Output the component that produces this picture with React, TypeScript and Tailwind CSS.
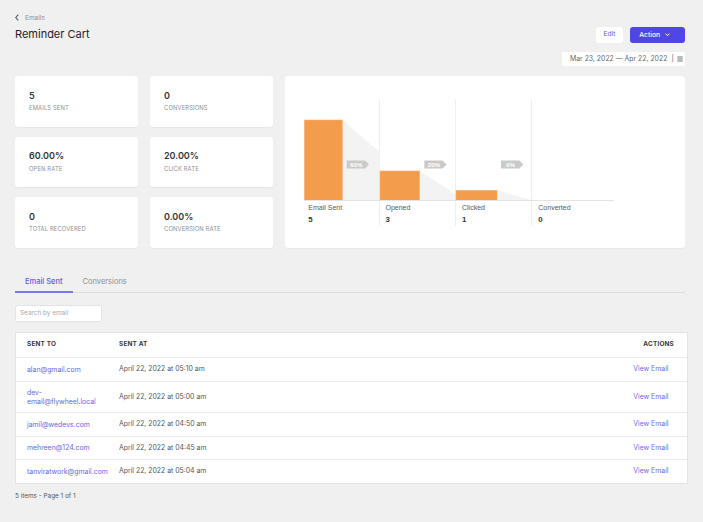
import React from "react";

const stats = [
  { value: "5", label: "Emails Sent" },
  { value: "0", label: "Conversions" },
  { value: "60.00%", label: "Open Rate" },
  { value: "20.00%", label: "Click Rate" },
  { value: "0", label: "Total Recovered" },
  { value: "0.00%", label: "Conversion Rate" },
];

const rows = [
  { email: ["alan@gmail.com"], sentAt: "April 22, 2022 at 05:10 am" },
  { email: ["dev-", "email@flywheel.local"], sentAt: "April 22, 2022 at 05:00 am" },
  { email: ["jamil@wedevs.com"], sentAt: "April 22, 2022 at 04:50 am" },
  { email: ["mehreen@124.com"], sentAt: "April 22, 2022 at 04:45 am" },
  { email: ["tanviratwork@gmail.com"], sentAt: "April 22, 2022 at 05:04 am" },
];

// funnel stages, coordinates are page pixels (shifted into the card by the <g>)
const stages = [
  { label: "Email Sent", value: "5", lx: 308.3, bar: [304.3, 120, 38, 80.3] },
  { label: "Opened", value: "3", lx: 385.5, bar: [380, 171, 39.7, 29.3] },
  { label: "Clicked", value: "1", lx: 462, bar: [456, 190.3, 41, 10] },
  { label: "Converted", value: "0", lx: 538.3, bar: null },
];

const shades = [
  "342.3,120 379.5,152 379.5,200 342.3,200",
  "419.7,171 455.5,194.3 455.5,200 419.7,200",
  "497,190.3 531.5,200 497,200",
];

const tags = [
  { x: 346.7, text: "60%" },
  { x: 424.3, text: "20%" },
  { x: 501, text: "0%" },
];

const FunnelChart: React.FC = () => (
  <svg width="400" height="171" viewBox="0 0 400 171" className="block">
    <g transform="translate(-285 -76)">
      {[379.5, 455.5, 531.5].map((x) => (
        <line key={x} x1={x} x2={x} y1={99} y2={226.5} stroke="#efefef" strokeWidth="1" />
      ))}
      {shades.map((p) => (
        <polygon key={p} points={p} fill="#f3f3f3" />
      ))}
      {stages.map((s) =>
        s.bar ? (
          <rect
            key={s.label}
            x={s.bar[0]}
            y={s.bar[1]}
            width={s.bar[2]}
            height={s.bar[3]}
            fill="#f39c4b"
            stroke="#f6b27a"
            strokeWidth="0.6"
          />
        ) : null
      )}
      <line x1={304} x2={614} y1={200.5} y2={200.5} stroke="#e4e4e4" strokeWidth="1" />
      {tags.map((t) => (
        <g key={t.text}>
          <polygon
            points={`${t.x},160.4 ${t.x + 18.3},160.4 ${t.x + 22.3},164.4 ${t.x + 18.3},168.4 ${t.x},168.4`}
            fill="#cacaca"
          />
          <text
            x={t.x + 9.6}
            y={166.6}
            textAnchor="middle"
            fontSize="6.2"
            fontWeight="700"
            fill="#ffffff"
            fontFamily="'Liberation Sans', Arial, sans-serif"
          >
            {t.text}
          </text>
        </g>
      ))}
      {stages.map((s) => (
        <g key={s.label} fontFamily="'Liberation Sans', Arial, sans-serif">
          <text x={s.lx} y={210.3} fontSize="7" fill="#555a60">
            {s.label}
          </text>
          <text x={s.lx} y={222} fontSize="7.8" fontWeight="700" fill="#32373c">
            {s.value}
          </text>
        </g>
      ))}
    </g>
  </svg>
);

export default function App() {
  return (
    <div className="min-h-screen bg-[#f0f0f1] pl-[15px] pr-[18px] pt-[13.5px] pb-4 font-['Inter',sans-serif] text-[#2c3338]">
      <div className="flex items-start justify-between">
        <div>
          <div className="flex h-[8px] items-center gap-[6px] text-[6.5px] leading-[8px] text-[#8a8e93]">
            <svg width="4" height="7" viewBox="0 0 4 7">
              <path d="M3.3 0.6 L0.8 3.5 L3.3 6.4" stroke="#50575e" strokeWidth="1.1" fill="none" />
            </svg>
            <span>Emails</span>
          </div>
          <h1 className="mt-[5.8px] text-[11px] leading-[14px] text-[#1d2327]">Reminder Cart</h1>
        </div>
        <div className="flex flex-col items-end pt-[13.5px]">
          <div className="flex gap-[7px]">
            <button className="flex h-[16px] w-[27px] items-center justify-center rounded-[3px] bg-white text-[6.6px] text-[#5b55e6]">
              Edit
            </button>
            <button className="flex h-[16px] w-[55px] items-center gap-[5px] rounded-[3px] bg-[#4f46e5] pl-[9.3px] text-[6.8px] font-medium text-white">
              Action
              <svg width="5" height="3.5" viewBox="0 0 5 3.5">
                <path d="M0.6 0.6 L2.5 2.7 L4.4 0.6" stroke="#ffffff" strokeWidth="1" fill="none" />
              </svg>
            </button>
          </div>
          <div className="mt-[9px] flex h-[14px] w-[123px] items-center rounded-[2px] bg-white pl-[8px] text-[6.9px] text-[#646970]">
            <span>Mar 23, 2022 — Apr 22, 2022</span>
            <span className="ml-[4px] text-[#50575e]">|</span>
            <svg className="ml-[3.5px]" width="6" height="6" viewBox="0 0 6 6">
              <path d="M0.3 1 H5.7 M0.3 3 H5.7 M0.3 5 H5.7" stroke="#50575e" strokeWidth="0.8" />
            </svg>
          </div>
        </div>
      </div>

      <div className="mt-[10px] flex gap-[12px]">
        <div className="grid w-[258px] grid-cols-2 gap-x-[12px] gap-y-[10.2px]">
          {stats.map((s) => (
            <div
              key={s.label}
              className="h-[50.5px] rounded-[3px] bg-white pl-[14px] pt-[13.5px] shadow-[0_1px_1px_rgba(0,0,0,0.04)]"
            >
              <div className="text-[9px] font-semibold leading-[11px] text-[#32373c]">{s.value}</div>
              <div className="mt-[3.5px] text-[5.8px] uppercase leading-[8px] tracking-[0.15px] text-[#8c8f94]">
                {s.label}
              </div>
            </div>
          ))}
        </div>
        <div className="h-[171.5px] flex-1 overflow-hidden rounded-[3px] bg-white shadow-[0_1px_1px_rgba(0,0,0,0.04)]">
          <FunnelChart />
        </div>
      </div>

      <div className="mt-[20px] flex border-b border-[#dcdcde]">
        <div className="-mb-px border-b-2 border-[#7c76f0] px-[10px] pb-[4px] pt-[9px] text-[7.5px] font-medium leading-[10px] text-[#5f58ec]">
          Email Sent
        </div>
        <div className="-mb-px border-b-2 border-transparent px-[10px] pb-[4px] pt-[9px] text-[7.5px] leading-[10px] text-[#8c8f94]">
          Conversions
        </div>
      </div>

      <div className="mt-[12px] flex h-[17px] w-[87px] items-center rounded-[2px] border border-[#e2e4e7] bg-white pl-[4px] text-[6.4px] text-[#a7aaad]">
        Search by email
      </div>

      <div className="-mr-[3px] mt-[10.5px] border border-[#e2e4e7] bg-white">
        <div className="flex h-[24.5px] items-center border-b border-[#ececec] text-[6.4px] font-bold uppercase tracking-[0.2px] text-[#32373c]">
          <div className="w-[103px] pl-[11px]">Sent To</div>
          <div className="flex-1">Sent At</div>
          <div className="pr-[13px]">Actions</div>
        </div>
        {rows.map((r, i) => (
          <div
            key={r.email.join("")}
            className={`flex items-center text-[6.9px] ${i > 0 ? "border-t border-[#ececec]" : ""} ${
              r.email.length > 1 ? "h-[31px]" : "h-[23.5px]"
            }`}
          >
            <div className="w-[103px] whitespace-nowrap pl-[11px] leading-[9.7px] text-[#6a63ee]">
              {r.email.map((line) => (
                <div key={line}>{line}</div>
              ))}
            </div>
            <div className="flex-1 text-[#50575e]">{r.sentAt}</div>
            <div className="pr-[18.5px] text-[#6f6af0]">View Email</div>
          </div>
        ))}
      </div>

      <div className="mt-[8.5px] text-[6.4px] leading-[8px] text-[#50575e]">5 items - Page 1 of 1</div>
    </div>
  );
}
